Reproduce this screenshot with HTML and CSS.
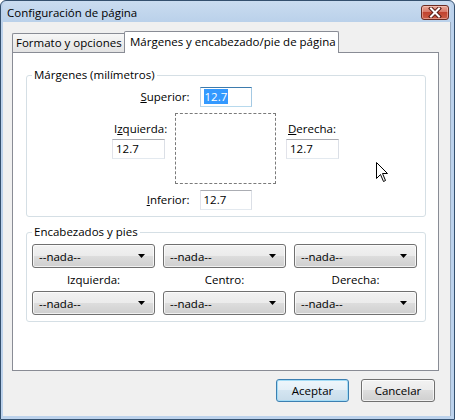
FILE: index.html
```html
<!DOCTYPE html>
<html lang="es">
<head>
<meta charset="utf-8">
<title>Configuración de página</title>
<link rel="stylesheet" href="styles.css">
</head>
<body>
<div class="window">
  <div class="titlebar">
    <span class="title">Configuración de página</span>
    <div class="close">
      <svg width="14" height="11" viewBox="0 0 14 11">
        <path d="M3 1.5 L11 9.5 M11 1.5 L3 9.5" stroke="#5a1d16" stroke-width="4" stroke-linecap="square"/>
        <path d="M3 1.5 L11 9.5 M11 1.5 L3 9.5" stroke="#ffffff" stroke-width="2" stroke-linecap="square"/>
      </svg>
    </div>
  </div>
  <div class="client">
    <div class="tabs">
      <div class="tab">Formato y opciones</div>
      <div class="tab active">Márgenes y encabezado/pie de página</div>
    </div>
    <div class="panel">
      <fieldset class="group margins">
        <legend>Márgenes (milímetros)</legend>
        <div class="vrow">
          <span class="vlabel"><u>S</u>uperior:</span>
          <div class="input focus"><span class="sel">12.7</span></div>
          <span></span>
        </div>
        <div class="mid">
          <div class="side">
            <span class="slabel">I<u>z</u>quierda:</span>
            <div class="input">12.7</div>
          </div>
          <div class="page"></div>
          <div class="side">
            <span class="slabel"><u>D</u>erecha:</span>
            <div class="input">12.7</div>
          </div>
        </div>
        <div class="vrow">
          <span class="vlabel"><u>I</u>nferior:</span>
          <div class="input">12.7</div>
          <span></span>
        </div>
      </fieldset>
      <fieldset class="group hf">
        <legend>Encabezados y pies</legend>
        <div class="hfgrid">
          <div class="select"><span>--nada--</span><svg width="7" height="4" viewBox="0 0 7 4"><path d="M0 0 H7 L3.5 4 Z" fill="#000"/></svg></div>
          <div class="select"><span>--nada--</span><svg width="7" height="4" viewBox="0 0 7 4"><path d="M0 0 H7 L3.5 4 Z" fill="#000"/></svg></div>
          <div class="select"><span>--nada--</span><svg width="7" height="4" viewBox="0 0 7 4"><path d="M0 0 H7 L3.5 4 Z" fill="#000"/></svg></div>
          <div class="hflabel">Izquierda:</div>
          <div class="hflabel">Centro:</div>
          <div class="hflabel">Derecha:</div>
          <div class="select"><span>--nada--</span><svg width="7" height="4" viewBox="0 0 7 4"><path d="M0 0 H7 L3.5 4 Z" fill="#000"/></svg></div>
          <div class="select"><span>--nada--</span><svg width="7" height="4" viewBox="0 0 7 4"><path d="M0 0 H7 L3.5 4 Z" fill="#000"/></svg></div>
          <div class="select"><span>--nada--</span><svg width="7" height="4" viewBox="0 0 7 4"><path d="M0 0 H7 L3.5 4 Z" fill="#000"/></svg></div>
        </div>
      </fieldset>
    </div>
    <div class="buttons">
      <div class="btn default">Aceptar</div>
      <div class="btn">Cancelar</div>
    </div>
  </div>
  <svg class="cursor" width="13" height="21" viewBox="0 0 13 21">
    <path d="M0.5 0.5 L0.5 16.5 L4.5 12.5 L7.5 19.5 L9.5 18.5 L6.5 11.5 L11.5 11.5 Z" fill="#fff" stroke="#000" stroke-width="1" stroke-linejoin="miter"/>
  </svg>
</div>
</body>
</html>
```

FILE: styles.css
```css
* { box-sizing: border-box; }

html, body {
  margin: 0;
  padding: 0;
  background: #ffffff;
}

body {
  font-family: "Open Sans", "Noto Sans", sans-serif;
  font-size: 11px;
  color: #000;
}

.window {
  position: relative;
  width: 455px;
  height: 420px;
  border: 1px solid #34506e;
  border-radius: 6px 6px 0 0;
  background: #bcd2ec;
  padding: 0 3px 3px 2px;
  display: flex;
  flex-direction: column;
}

.titlebar {
  height: 21px;
  display: flex;
  justify-content: space-between;
  align-items: flex-start;
  padding-left: 4px;
  background: linear-gradient(#cadcf0, #bad1ea);
  border-radius: 5px 5px 0 0;
}

.title {
  font-size: 11.5px;
  line-height: 21px;
  padding-top: 1px;
  color: #000;
}

.close {
  width: 28px;
  height: 15px;
  margin-top: 4px;
  margin-right: 2px;
  border: 1px solid #6b2b22;
  border-radius: 3px;
  background: linear-gradient(#e9a898 0%, #d87868 45%, #c1432f 50%, #cc5c45 100%);
  box-shadow: inset 0 0 0 1px rgba(255, 220, 210, 0.45);
  display: flex;
  align-items: center;
  justify-content: center;
}

.client {
  flex: 1;
  background: #f0f0f0;
  border-right: 1px solid #9aabbf;
  padding: 9px 15px 0 9px;
  display: flex;
  flex-direction: column;
}

.tabs {
  display: flex;
  align-items: flex-end;
  height: 21px;
  position: relative;
  z-index: 1;
}

.tab {
  height: 19px;
  border: 1px solid #898c95;
  border-right: none;
  border-bottom: none;
  background: linear-gradient(#f7f7f7, #e3e3e3);
  padding: 0 0 0 3px;
  line-height: 18px;
  font-size: 11.5px;
  white-space: nowrap;
  width: 112px;
  border-radius: 2px 0 0 0;
}

.tab.active {
  height: 22px;
  margin-bottom: -1px;
  width: 215px;
  background: #ffffff;
  border-right: 1px solid #898c95;
  padding-left: 5px;
  line-height: 19px;
  border-radius: 2px 2px 0 0;
}

.panel {
  width: 427px;
  height: 319px;
  background: #ffffff;
  border: 1px solid #898c95;
  padding: 0 12px 0 13px;
  display: flex;
  flex-direction: column;
}

.group {
  margin: 0;
  border: 1px solid #d5dfe5;
  border-radius: 3px;
  padding: 4px 6px 6px 5px;
  min-width: 0;
}

.group legend {
  padding: 0 2px;
  line-height: 16px;
  font-size: 11.5px;
}

.margins {
  margin-top: 14px;
}

.hf {
  margin-top: 7px;
}

.vrow {
  display: grid;
  grid-template-columns: 1fr 52px 1fr;
  align-items: center;
  height: 20px;
}

.vlabel {
  justify-self: end;
  margin-right: 10px;
  line-height: 20px;
  font-size: 11.5px;
}

.input {
  height: 20px;
  width: 53px;
  border: 1px solid #abadb3;
  border-color: #abadb3 #dbdfe6 #e3e9ef #e2e3ea;
  background: #fff;
  padding: 0 0 0 3px;
  line-height: 18px;
  font-size: 11.5px;
}

.vrow .input {
  width: 52px;
}

.input.focus {
  border-color: #3d7bad #a4c9e3 #b7d9ed #b5cfe7;
}

.sel {
  background: #3399ff;
  color: #fff;
  display: inline-block;
  line-height: 15px;
  padding: 0 1px;
}

.mid {
  display: flex;
  justify-content: center;
  gap: 10px;
  margin: 6px 0;
}

.side {
  display: flex;
  flex-direction: column;
  padding-top: 6px;
  width: 53px;
}

.slabel {
  line-height: 20px;
  padding-left: 2px;
  font-size: 11.5px;
  white-space: nowrap;
}

.page {
  width: 101px;
  height: 71px;
  border: 1px dashed #7a7a7a;
}

.hfgrid {
  display: grid;
  grid-template-columns: repeat(3, 123px);
  grid-template-rows: 24px 23px 24px;
  column-gap: 8px;
}

.select {
  height: 24px;
  border: 1px solid #707070;
  border-radius: 3px;
  background: linear-gradient(#f2f2f2 0%, #ebebeb 50%, #dddddd 50%, #cfcfcf 100%);
  box-shadow: inset 0 0 0 1px rgba(255, 255, 255, 0.7);
  display: flex;
  align-items: center;
  justify-content: space-between;
  padding: 0 9px 0 6px;
  font-size: 11.5px;
}

.hflabel {
  text-align: center;
  line-height: 23px;
  font-size: 11.5px;
}

.buttons {
  display: flex;
  justify-content: flex-end;
  gap: 12px;
  margin-top: 8px;
}

.btn {
  width: 74px;
  height: 23px;
  border: 1px solid #707070;
  border-radius: 3px;
  background: linear-gradient(#f2f2f2 0%, #ebebeb 50%, #dddddd 50%, #cfcfcf 100%);
  box-shadow: inset 0 0 0 1px rgba(255, 255, 255, 0.7);
  text-align: center;
  line-height: 21px;
  font-size: 11.5px;
}

.btn.default {
  width: 73px;
  border-color: #3c7fb1;
  box-shadow: inset 0 0 0 1px #a3dcf6;
  background: linear-gradient(#eef6fb 0%, #e4eff7 50%, #d4e5f1 50%, #c8dcea 100%);
}

.cursor {
  position: absolute;
  left: 375px;
  top: 161px;
}
```
